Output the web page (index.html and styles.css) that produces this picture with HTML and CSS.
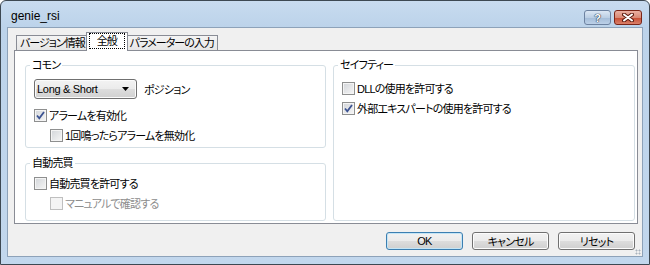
FILE: index.html
```html
<!DOCTYPE html>
<html>

<head>
    <meta charset='UTF-8'>
    <title>genie_rsi</title>
    <link rel="stylesheet" href="styles.css">
</head>

<body>
    <div class="window">
        <div class="titlebar">
            <span class="title">genie_rsi</span>
            <div class="caption-buttons">
                <span class="cap-btn help">?</span>
                <span class="cap-btn close">
                    <svg width="12" height="9" viewBox="0 0 12 9">
                        <path d="M2 1.5 L10 7.5 M10 1.5 L2 7.5" stroke="#5b1a0e" stroke-width="4" stroke-linecap="round" />
                        <path d="M2 1.5 L10 7.5 M10 1.5 L2 7.5" stroke="#fff" stroke-width="2" stroke-linecap="round" />
                    </svg>
                </span>
            </div>
        </div>

        <div class="client">
            <div class="tabs">
                <span class="tab">バージョン情報</span>
                <span class="tab active"><span class="focus">全般</span></span>
                <span class="tab">パラメーターの入力</span>
            </div>

            <div class="panel">
                <div class="col">
                    <fieldset class="group common">
                        <legend>コモン</legend>
                        <div class="combo-row">
                            <div class="combo">
                                <span>Long &amp; Short</span>
                                <svg width="7" height="4" viewBox="0 0 7 4"><polygon points="0,0 7,0 3.5,4" fill="#000" /></svg>
                            </div>
                            <span>ポジション</span>
                        </div>
                        <div class="row">
                            <span class="check"><svg width="11" height="11" viewBox="0 0 11 11"><path d="M2 5.5 L4.3 8.3 L9 2" stroke="#3c5392" stroke-width="1.8" fill="none" /></svg></span>
                            アラームを有効化
                        </div>
                        <div class="row indent">
                            <span class="check"></span>
                            1回鳴ったらアラームを無効化
                        </div>
                    </fieldset>

                    <fieldset class="group auto">
                        <legend>自動売買</legend>
                        <div class="row">
                            <span class="check"></span>
                            自動売買を許可する
                        </div>
                        <div class="row indent disabled">
                            <span class="check"></span>
                            マニュアルで確認する
                        </div>
                    </fieldset>
                </div>

                <fieldset class="group safety">
                    <legend>セイフティー</legend>
                    <div class="row">
                        <span class="check"></span>
                        DLLの使用を許可する
                    </div>
                    <div class="row">
                        <span class="check"><svg width="11" height="11" viewBox="0 0 11 11"><path d="M2 5.5 L4.3 8.3 L9 2" stroke="#3c5392" stroke-width="1.8" fill="none" /></svg></span>
                        外部エキスパートの使用を許可する
                    </div>
                </fieldset>
            </div>

            <div class="buttons">
                <span class="btn default">OK</span>
                <span class="btn">キャンセル</span>
                <span class="btn">リセット</span>
            </div>

            <span class="grip"></span>
        </div>
    </div>
</body>

</html>
```

FILE: styles.css
```css
body {
    margin: 0;
    font-family: "Liberation Sans", "Noto Sans CJK JP", sans-serif;
    font-size: 11px;
    font-feature-settings: "palt";
    letter-spacing: -0.8px;
    color: #000;
    background: #fff;
}

/* ウィンドウ枠 */
.window {
    width: 650px;
    height: 265px;
    box-sizing: border-box;
    border: 1px solid #3d4852;
    border-radius: 6px 6px 0 0;
    background: linear-gradient(#c8dbef, #bcd3ea 26px, #c2d7ed);
    display: flex;
    flex-direction: column;
}

.titlebar {
    height: 26px;
    box-sizing: border-box;
    padding: 7px 7px 0 10px;
    display: flex;
    align-items: flex-start;
    justify-content: space-between;
}

.title {
    font-size: 12px;
    line-height: 16px;
    letter-spacing: 0;
}

.caption-buttons {
    display: flex;
    gap: 3px;
    margin-top: 2px;
}

.cap-btn {
    width: 27px;
    height: 15px;
    box-sizing: border-box;
    border: 1px solid #6d82a0;
    border-radius: 3px;
    display: flex;
    align-items: center;
    justify-content: center;
}

.help {
    background: linear-gradient(#dce7f4, #bccfe4 50%, #a3bbd7 51%, #bcd1e8);
    color: #fff;
    font-weight: bold;
    font-size: 11px;
    letter-spacing: 0;
    text-shadow: 0 0 1px #2d3d55, 0 0 1px #2d3d55, 0 0 1px #2d3d55;
}

.close {
    width: 28px;
    border-color: #7a2517;
    background: linear-gradient(#eab0a2, #d98a76 50%, #c74a30 51%, #d9806a);
}

/* クライアント領域 */
.client {
    flex: 1;
    margin: 0 6px 7px;
    border: 1px solid #8da2b9;
    background: #f0f0f0;
    padding: 4px 4px 6px 6px;
    display: flex;
    flex-direction: column;
    position: relative;
}

.tabs {
    display: flex;
    align-items: flex-end;
    height: 18px;
    padding-left: 2px;
}

.tab {
    height: 15px;
    box-sizing: border-box;
    border: 1px solid #898c95;
    border-bottom: none;
    background: linear-gradient(#f4f4f4, #e6e6e6);
    padding: 0 3px;
    line-height: 14px;
    letter-spacing: -1px;
    margin-right: -1px;
}

.tab.active {
    height: 19px;
    margin: 0 -2px -1px;
    padding: 0 2px;
    background: #fff;
    position: relative;
    z-index: 1;
}

.focus {
    display: block;
    border: 1px dotted #000;
    padding: 0 7px;
    line-height: 14px;
}

.panel {
    height: 174px;
    box-sizing: border-box;
    border: 1px solid #898c95;
    background: #fff;
    padding: 7px 2px 2px 10px;
    display: grid;
    grid-template-columns: 301px 302px;
    column-gap: 7px;
}

.col {
    display: flex;
    flex-direction: column;
    gap: 8px;
}

.group {
    margin: 0;
    min-width: 0;
    border: 1px solid #d5dfe5;
    border-radius: 3px;
    padding: 0 8px;
}

.group legend {
    padding: 0 2px;
    margin-left: -4px;
    line-height: 14px;
}

.common {
    padding-top: 7px;
    padding-bottom: 2px;
}

.auto {
    flex: 1;
    padding-top: 3px;
}

.safety {
    padding-top: 6px;
}

.combo-row {
    display: flex;
    align-items: center;
    gap: 7px;
    height: 20px;
    margin-bottom: 6px;
}

.combo {
    width: 103px;
    height: 20px;
    box-sizing: border-box;
    border: 1px solid #707070;
    border-radius: 3px;
    background: linear-gradient(#f3f3f3, #ebebeb 50%, #dddddd 51%, #d0d0d0);
    box-shadow: inset 0 0 0 1px #fbfbfb;
    padding: 0 7px 0 2px;
    letter-spacing: -0.3px;
    display: flex;
    align-items: center;
    justify-content: space-between;
}

/* チェックボックス */
.row {
    display: flex;
    align-items: center;
    gap: 2px;
    height: 20px;
}

.row.indent {
    margin-left: 16px;
}

.row.disabled {
    color: #8d8d8d;
}

.check {
    width: 13px;
    height: 13px;
    box-sizing: border-box;
    border: 1px solid #8e8f8f;
    background: linear-gradient(135deg, #d2d5d9, #f6f6f6);
    box-shadow: inset 0 0 0 1px #f4f4f4;
    display: flex;
    align-items: center;
    justify-content: center;
}

.disabled .check {
    border-color: #bfbfbf;
    background: #f4f4f4;
}

/* ボタン */
.buttons {
    display: flex;
    justify-content: flex-end;
    gap: 9px;
    margin-top: 8px;
    padding-right: 3px;
}

.btn {
    width: 77px;
    height: 18px;
    box-sizing: border-box;
    border: 1px solid #707070;
    border-radius: 3px;
    background: linear-gradient(#f2f2f2, #ebebeb 50%, #dddddd 51%, #cfcfcf);
    box-shadow: inset 0 0 0 1px #fcfcfc;
    display: flex;
    align-items: center;
    justify-content: center;
}

.btn.default {
    border-color: #3c7fb1;
    box-shadow: inset 0 0 0 1px #c4e5f6;
}

.grip {
    position: absolute;
    right: 1px;
    bottom: 1px;
    width: 6px;
    height: 6px;
    background: radial-gradient(circle, #a9b3bd 0.8px, transparent 1.2px) 0 0 / 3px 3px;
}
```
